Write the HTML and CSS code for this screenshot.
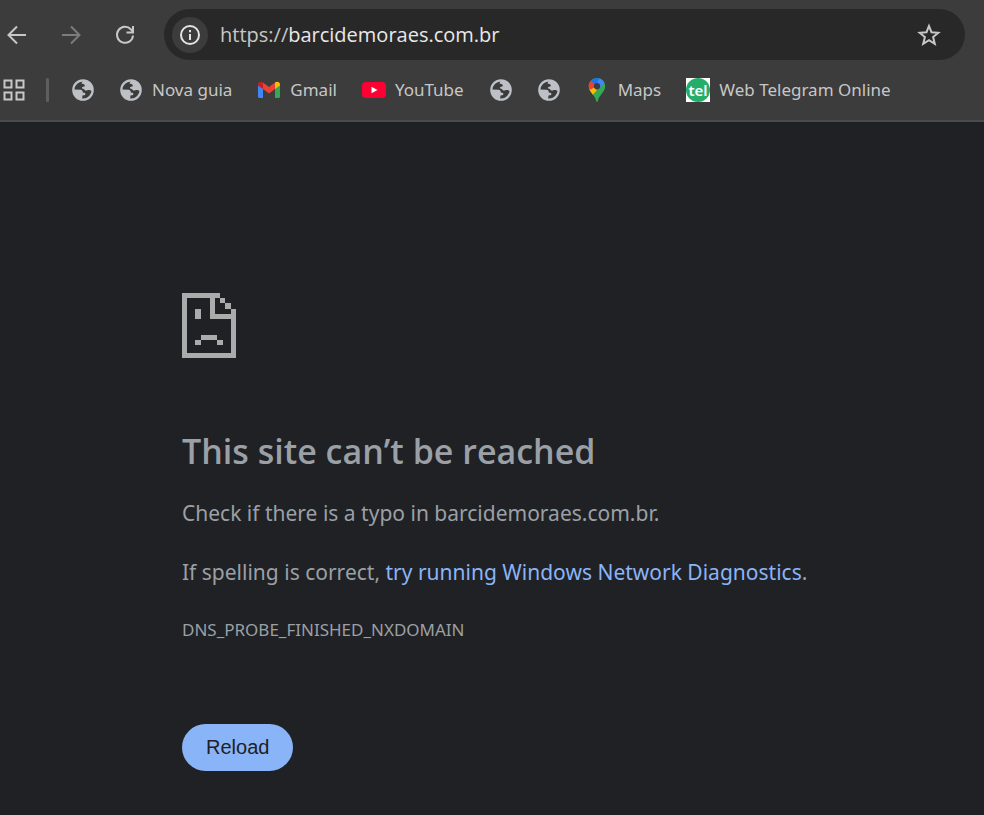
FILE: index.html
```html
<!DOCTYPE html>
<html lang="en">
<head>
<meta charset="utf-8">
<meta name="viewport" content="width=device-width, initial-scale=1">
<title>barcidemoraes.com.br</title>
<link rel="stylesheet" href="styles.css">
</head>
<body>
<svg class="sprite" aria-hidden="true">
  <symbol id="globe" viewBox="0 0 24 24">
    <circle cx="12" cy="12" r="9.7" fill="none" stroke="currentColor" stroke-width="2.2"/>
    <path fill="currentColor" d="M12 2.2C14 2 18 3 20 6.500C22 10 22 12 21 13L18.500 12C17 11.500 16 12.800 14.500 12.600C13.500 12.500 13.500 10.800 12 10.700C10.500 10.500 10.500 9 12 8.700L14 8.200L13.200 6.200L10.500 5.500ZM2.500 11.500L9.500 11.700C11.500 12 11.700 13 11.800 14.500L14.200 15V17L11.500 17.500L11 21.500C6 21 3 18 2.500 11.500Z"/>
  </symbol>
</svg>
<header class="browser">
  <div class="toolbar">
    <nav class="nav" aria-label="History">
      <button class="icon-button" type="button" aria-label="Back"><svg class="icon" viewBox="0 0 24 24"><path d="M21 12H4M12 3.500L3.500 12L12 20.500"/></svg></button>
      <button class="icon-button" type="button" aria-label="Forward" disabled><svg class="icon" viewBox="0 0 24 24"><path d="M3 12H20M12 3.500L20.500 12L12 20.500"/></svg></button>
      <button class="icon-button" type="button" aria-label="Reload page"><svg class="icon" viewBox="0 0 24 24"><path d="M20 12.500A8 8 0 1 1 18 6.500L20 9M20 3V9.500H13.500"/></svg></button>
    </nav>
    <div class="omnibox">
      <button class="site-info" type="button" aria-label="View site information"><svg class="icon" viewBox="0 0 24 24"><circle cx="12" cy="12" r="9"/><path d="M12 11V17M12 7V9.200"/></svg></button>
      <p class="url">https://<span class="host">barcidemoraes.com.br</span></p>
      <button class="icon-button" type="button" aria-label="Bookmark this tab"><svg class="icon" viewBox="0 0 24 24"><path d="M12 3L14.500 9.200L21.300 9.700L16.100 14L17.800 20.800L12 17.200L6.200 20.800L7.900 14L2.700 9.700L9.500 9.200Z"/></svg></button>
    </div>
  </div>
  <nav class="bookmarks" aria-label="Bookmarks">
    <button class="apps" type="button" aria-label="Tab groups"><svg class="icon" viewBox="0 0 24 24"><path d="M2.500 2.500H9.500V9.500H2.500ZM14.500 2.500H21.500V9.500H14.500ZM2.500 14.500H9.500V21.500H2.500ZM14.500 14.500H21.500V21.500H14.500Z"/></svg></button>
    <span class="separator"></span>
    <a class="bookmark" href="#" aria-label="Bookmark"><svg class="favicon"><use href="#globe"/></svg></a>
    <a class="bookmark named" href="#"><svg class="favicon"><use href="#globe"/></svg>Nova guia</a>
    <a class="bookmark named" href="#"><svg class="favicon" viewBox="0 0 24 24"><path fill="#4285f4" d="M1 7L6 10.500V20H2.500Q1 20 1 18.500Z"/><path fill="#34a853" d="M18 10.500L23 7V18.500Q23 20 21.500 20H18Z"/><path fill="#c5221f" d="M1 6.500C1 3.800 4 3 6 4.500V11L1 7.500Z"/><path fill="#fbbc04" d="M18 4.500C20 3 23 3.800 23 6.500V7.500L18 11Z"/><path fill="#ea4335" d="M6 4.500L12 9L18 4.500V11L12 15.500L6 11Z"/></svg>Gmail</a>
    <a class="bookmark named" href="#"><svg class="favicon" viewBox="0 0 24 24"><rect y="4" width="24" height="16" rx="4" fill="#ff0033"/><path fill="#fff" d="M9.500 8.700L15.500 12L9.500 15.300Z"/></svg>YouTube</a>
    <a class="bookmark" href="#" aria-label="Bookmark"><svg class="favicon"><use href="#globe"/></svg></a>
    <a class="bookmark" href="#" aria-label="Bookmark"><svg class="favicon"><use href="#globe"/></svg></a>
    <a class="bookmark named" href="#"><svg class="favicon" viewBox="0 0 24 24"><defs><clipPath id="pin"><path d="M12 0C7.300 0 3.800 3.700 3.800 8.200C3.800 14 10 17 11 22.500Q12 25.500 13 22.500C14 17 20.200 14 20.200 8.200C20.200 3.700 16.700 0 12 0Z"/></clipPath></defs><g clip-path="url(#pin)"><path fill="#34a853" d="M0 0H24V24H0Z"/><path fill="#fbbc04" d="M0 10L6 6H18L6.500 18L0 18Z"/><path fill="#ea4335" d="M0 0H8L12 8L3.800 12.500L0 9Z"/><path fill="#1a73e8" d="M5.700 3L9 0H16L12 8.200Z"/><path fill="#4285f4" d="M14.500 0H20L19.500 5L12 13L10 9.500Z"/></g><circle cx="12" cy="8.200" r="3.100" fill="#3c3c3c"/></svg>Maps</a>
    <a class="bookmark named" href="#"><svg class="favicon" viewBox="0 0 24 24"><path fill="#fff" d="M0 0H24V24H0Z"/><circle cx="12" cy="12" r="12" fill="#25ae6a"/><text class="tel" x="12" y="18" text-anchor="middle">tel</text></svg>Web Telegram Online</a>
  </nav>
</header>
<main class="error">
  <svg class="sad-page" viewBox="0 0 162 195" role="img" aria-label="Page unavailable"><path fill="currentColor" shape-rendering="crispEdges" d="M0 0H114V15H99V63H147V48H162V195H0ZM15 15V180H147V78H84V15ZM114 15H130V31H114ZM130 31H147V48H130ZM39 48H56V78H39ZM56 126H106V141H56ZM39 141H56V157H39ZM106 141H122V157H106Z" fill-rule="evenodd"/></svg>
  <h1>This site can’t be reached</h1>
  <p>Check if there is a typo in barcidemoraes.com.br.</p>
  <p>If spelling is correct, <a href="#">try running Windows Network Diagnostics</a>.</p>
  <p class="code">DNS_PROBE_FINISHED_NXDOMAIN</p>
  <button class="reload" type="button">Reload</button>
</main>
</body>
</html>
```
FILE: styles.css
```css
* {
  box-sizing: border-box;
}

body {
  margin: 0;
  min-height: 100vh;
  background: #202124;
  color: #9aa0a6;
  font-family: "Noto Sans", "Open Sans", sans-serif;
}

button {
  border: 0;
  padding: 0;
  background: none;
  color: inherit;
  font: inherit;
}

a {
  text-decoration: none;
}

.sprite {
  position: absolute;
  width: 0;
  height: 0;
}

.browser {
  background: #3c3c3c;
  color: #c7c7c7;
  border-bottom: 2px solid #4a4b4c;
}

.toolbar {
  display: flex;
  align-items: center;
  gap: 27px;
  padding: 9px 19px 0 5px;
}

.nav {
  display: flex;
  gap: 30px;
}

.icon-button {
  display: flex;
}

.icon-button:disabled {
  color: #7c7c7c;
}

.icon {
  width: 24px;
  height: 24px;
  fill: none;
  stroke: currentColor;
  stroke-width: 2;
}

.omnibox {
  flex: 1;
  display: flex;
  align-items: center;
  height: 51px;
  padding: 0 24px 0 8px;
  border-radius: 26px;
  background: #282828;
}

.site-info {
  display: grid;
  place-items: center;
  width: 36px;
  height: 36px;
  border-radius: 50%;
  background: #3c3c3c;
  color: #e3e3e3;
}

.url {
  flex: 1;
  margin: 0 0 0 12px;
  font-family: "Open Sans", "Noto Sans", sans-serif;
  font-size: 20px;
}

.host {
  color: #e8e8e8;
}

.bookmarks {
  display: flex;
  align-items: center;
  gap: 24px;
  height: 60px;
  padding-left: 2px;
  font-size: 17px;
  line-height: 22px;
  white-space: nowrap;
}

.apps {
  display: flex;
}

.separator {
  width: 3px;
  height: 24px;
  margin: 0 -2px 0 -4px;
  border-radius: 2px;
  background: #5f5f5f;
}

.bookmark {
  display: flex;
  align-items: center;
  gap: 9px;
  color: #c7c7c7;
}

.named {
  padding-right: 1px;
}

.favicon {
  width: 24px;
  height: 24px;
  color: #bdc1c6;
}

.tel {
  fill: #fff;
  font-size: 15px;
  font-weight: 600;
}

.error {
  max-width: 900px;
  padding: 171px 0 44px 182px;
}

.sad-page {
  display: block;
  width: 54px;
  height: 65px;
  color: #ababab;
}

h1 {
  margin: 68px 0 0;
  font-family: "Open Sans", "Noto Sans", sans-serif;
  font-size: 34px;
  font-weight: 600;
  line-height: 50px;
}

.error p {
  margin: 25px 0 0;
  font-size: 21px;
  line-height: 34px;
}

.error h1 + p {
  margin-top: 20px;
}

.error a {
  color: #8ab4f8;
}

.error .code {
  margin-top: 24px;
  font-size: 17px;
}

.reload {
  height: 47px;
  margin-top: 77px;
  padding: 0 24px;
  border-radius: 24px;
  background: #8ab4f8;
  color: #202124;
  font-family: "Liberation Sans", Arial, sans-serif;
  font-size: 20px;
}
```
